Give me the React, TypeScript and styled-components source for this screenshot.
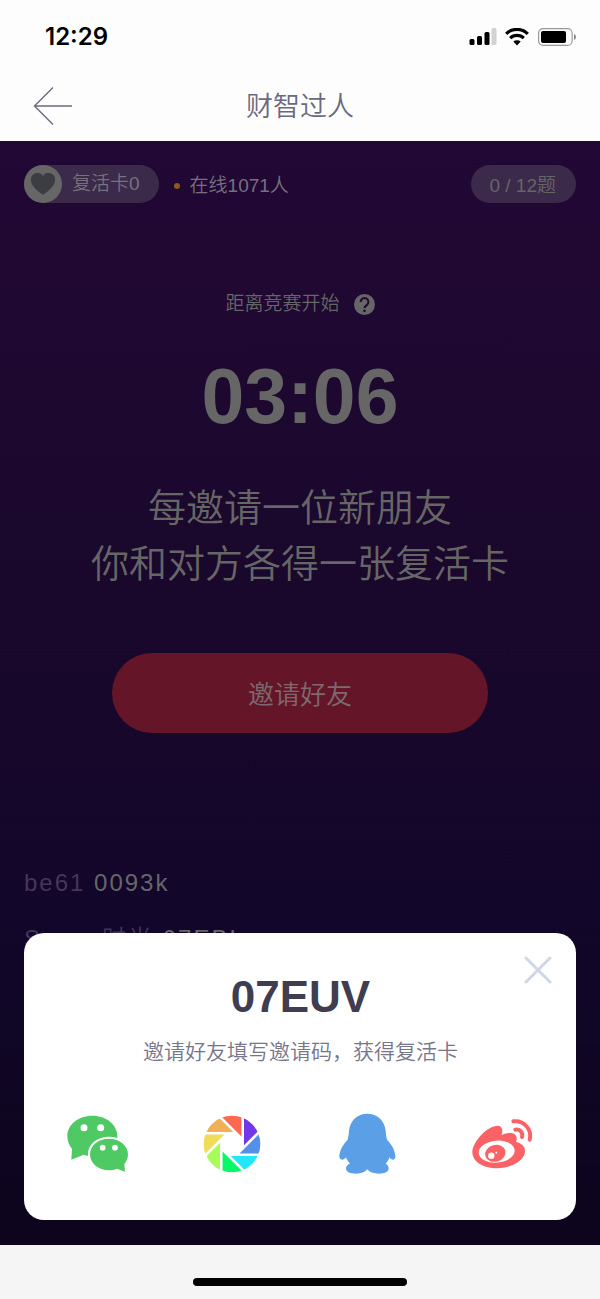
import React from "react";
import styled, { createGlobalStyle } from "styled-components";

const GlobalStyle = createGlobalStyle`
  *, *::before, *::after { box-sizing: border-box; }
  body {
    margin: 0;
    font-family: "Liberation Sans", "Noto Sans CJK SC", sans-serif;
    font-weight: 350;
  }
  button { font: inherit; color: inherit; border: 0; background: none; padding: 0; cursor: pointer; }
  h1, p, ul { margin: 0; padding: 0; }
  svg { display: block; }
`;

const Screen = styled.div`
  display: flex;
  flex-direction: column;
  min-height: 100vh;
  background: #f5f5f5;
`;

const Header = styled.header`
  background: #fdfdfd;
`;

const StatusBar = styled.div`
  display: flex;
  align-items: center;
  justify-content: space-between;
  height: 72px;
  padding: 2px 23px 0 45px;
`;

const Clock = styled.time`
  font: 600 24px/32px Inter, sans-serif;
  color: #000;
`;

const StatusIcons = styled.div`
  display: flex;
  align-items: center;
  gap: 8px;
`;

const NavBar = styled.nav`
  display: grid;
  grid-template-columns: 1fr auto 1fr;
  align-items: center;
  height: 69px;
  padding: 0 32px;
`;

const BackButton = styled.button`
  justify-self: start;
`;

const Title = styled.h1`
  font-size: 27px;
  line-height: 40px;
  font-weight: 350;
  color: #6b6980;
`;

const Stage = styled.main`
  position: relative;
  flex: 1;
  display: flex;
  flex-direction: column;
  padding: 24px 24px 0;
  background: linear-gradient(#220835, #1a082c 40%, #12062a 70%, #0c051c);
  color: #666;
`;

const InfoRow = styled.div`
  display: flex;
  align-items: center;
  font-size: 19px;
  line-height: 38px;
`;

const Pill = styled.div`
  display: flex;
  align-items: center;
  height: 38px;
  border-radius: 19px;
  background: #3b2a4a;
`;

const LifePill = styled(Pill)`
  gap: 10px;
  padding-right: 19px;
  color: #77707f;
`;

const ProgressPill = styled(Pill)`
  margin-left: auto;
  padding: 3px 20px 0 18px;
`;

const HeartBadge = styled.span`
  display: grid;
  place-items: center;
  width: 38px;
  height: 38px;
  border-radius: 50%;
  background: #666;
`;

const Online = styled.div`
  display: flex;
  align-items: center;
  gap: 10px;
  height: 38px;
  margin-left: 15px;
  padding-top: 3px;
  color: #77707f;

  &::before {
    content: "";
    width: 6px;
    height: 6px;
    border-radius: 50%;
    background: #8c5a1c;
  }
`;

const Caption = styled.div`
  display: flex;
  align-items: center;
  justify-content: center;
  gap: 14px;
  margin-top: 86px;
  font-size: 19px;
  line-height: 30px;
`;

const HelpButton = styled.button`
  width: 21px;
  height: 21px;
`;

const Countdown = styled.div`
  margin-top: 33px;
  font-size: 77px;
  line-height: 88px;
  font-weight: 700;
  text-align: center;
`;

const Pitch = styled.p`
  margin-top: 40px;
  font-size: 38px;
  line-height: 56px;
  text-align: center;
`;

const InviteButton = styled.button`
  align-self: center;
  width: 68%;
  height: 80px;
  margin-top: 61px;
  padding-bottom: 2px;
  border-radius: 40px;
  background: #641628;
  font-size: 26px;
  color: #7c6a70;
`;

const Messages = styled.ul`
  margin-top: 122px;
  list-style: none;
  font-size: 24px;
  line-height: 56px;
  letter-spacing: 2px;
`;

const Sender = styled.span`
  color: #44365a;
`;

const Sheet = styled.section`
  position: absolute;
  left: 24px;
  right: 24px;
  bottom: 25px;
  padding: 38px 41px 44px 42px;
  border-radius: 20px;
  background: #fff;
  text-align: center;
`;

const CloseButton = styled.button`
  position: absolute;
  top: 23px;
  right: 24px;
`;

const Code = styled.div`
  font-size: 44px;
  line-height: 52px;
  font-weight: 700;
  color: #403d50;
`;

const Hint = styled.p`
  margin-top: 14px;
  font-size: 21px;
  line-height: 30px;
  color: #77758a;
`;

const ShareRow = styled.div`
  display: flex;
  justify-content: space-between;
  margin-top: 45px;
`;

const Footer = styled.footer`
  display: flex;
  justify-content: center;
  padding: 33px 0 13px;
`;

const HomeIndicator = styled.div`
  width: 214px;
  height: 8px;
  border-radius: 4px;
  background: #000;
`;

const SignalIcon = () => (
  <svg width="28" height="18" viewBox="0 0 28 18" aria-hidden="true">
    <rect x="0.5" y="11" width="5" height="6" rx="1.5" />
    <rect x="8" y="8" width="5" height="9" rx="1.5" />
    <rect x="15.5" y="4" width="5" height="13" rx="1.5" />
    <rect x="22.5" y="0" width="5" height="17" rx="1.5" fill="#d2d2d2" />
  </svg>
);

const WifiIcon = () => (
  <svg width="24" height="18" viewBox="0 0 24 18" aria-hidden="true">
    <g fill="none" stroke="#000" strokeWidth="3.2">
      <path d="M1.2 5.8a15.4 15.4 0 0 1 21.6 0" />
      <path d="M5.2 10.2a9.7 9.7 0 0 1 13.6 0" />
    </g>
    <path d="M8.3 13.6a5.4 5.4 0 0 1 7.4 0L12 17.4z" />
  </svg>
);

const BatteryIcon = () => (
  <svg width="40" height="18" viewBox="0 0 40 18" aria-hidden="true">
    <rect x="1.6" y="0.6" width="33.5" height="16.8" rx="4.5" fill="none" stroke="#999" strokeWidth="1.2" />
    <rect x="4" y="3" width="25" height="12" rx="2" />
    <path d="M37 6v6c2.6-1 2.6-5 0-6z" fill="#888" />
  </svg>
);

const BackIcon = () => (
  <svg width="40" height="40" viewBox="0 0 40 40" fill="none" stroke="#6b6980" strokeWidth="1.4" aria-hidden="true">
    <path d="M21 0.5 2.5 19 21 37.5M2.5 19H40" />
  </svg>
);

const HeartIcon = () => (
  <svg width="26" height="22" viewBox="0 0 26 22" fill="#3c3d42" aria-hidden="true">
    <path d="M13 22C8 18.5 1 13 1 7a6.5 6.5 0 0 1 12-4A6.5 6.5 0 0 1 25 7c0 6-7 11.5-12 15z" />
  </svg>
);

const HelpIcon = () => (
  <svg width="21" height="21" viewBox="0 0 21 21" aria-hidden="true">
    <circle cx="10.5" cy="10.5" r="10.5" fill="#666" />
    <path
      d="M6.6 7.9a3.9 3.9 0 1 1 6.1 3.2c-1.5 1-2.2 1.6-2.2 3"
      fill="none"
      stroke="#1f0832"
      strokeWidth="2"
    />
    <circle cx="10.5" cy="16.7" r="1.3" fill="#1f0832" />
  </svg>
);

const CloseIcon = () => (
  <svg width="28" height="28" viewBox="0 0 28 28" stroke="#cfd6e8" strokeWidth="3" strokeLinecap="round" aria-hidden="true">
    <path d="M2 2l24 24M26 2 2 26" />
  </svg>
);

const ShareIcon = ({ children }: { children: React.ReactNode }) => (
  <svg width="64" height="64" viewBox="48 36 192 192" aria-hidden="true">
    {children}
  </svg>
);

const WechatIcon = () => (
  <ShareIcon>
    <path
      fill="#4fc963"
      d="M127 47c42 0 75 27 75 61s-33 60-75 60c-9 0-18-1-26-4l-37 15 2-32c-9-11-14-24-14-39 0-34 33-61 75-61z"
    />
    <path
      fill="#4fc963"
      stroke="#fff"
      strokeWidth="12"
      paintOrder="stroke"
      d="M177 116c32 0 57 21 57 47 0 11-4 21-11 29l2 23-24-9c-7 3-15 5-24 5-32 0-57-21-57-48s25-47 57-47z"
    />
    <g fill="#fff">
      <circle cx="102" cy="83" r="10.5" />
      <circle cx="152" cy="83" r="10.5" />
      <circle cx="158" cy="143" r="8.5" />
      <circle cx="195" cy="143" r="8.5" />
    </g>
  </ShareIcon>
);

const BLADES = ["#7038e8", "#5590e8", "#20e8f8", "#08f868", "#a8fc58", "#f0dc58", "#f0b058", "#fc6850"];

const MomentsIcon = () => (
  <ShareIcon>
    <clipPath id="lens">
      <circle cx="141" cy="132" r="85" />
    </clipPath>
    <g clipPath="url(#lens)">
      {BLADES.map((color, i) => (
        <path key={color} fill={color} d="M177 10v126l90-90z" transform={`rotate(${i * 45} 141 132)`} />
      ))}
    </g>
  </ShareIcon>
);

const QqIcon = () => (
  <ShareIcon>
    <path
      fill="#5b9fe6"
      d="M142 41c30 0 52 21 55 52 1 10 2 20 5 28 14 13 24 34 24 48 0 6-2 10-7 10-4 0-8-3-11-7-2 8-6 14-11 19 6 3 9 8 9 14 0 12-14 16-30 16-15 0-27-4-34-13-7 9-19 13-34 13-16 0-30-4-30-16 0-6 4-11 12-14-5-5-9-11-12-19-3 4-7 7-12 7s-8-4-8-10c0-14 10-35 24-48 3-8 4-18 5-28 3-31 25-52 55-52z"
    />
  </ShareIcon>
);

const WeiboIcon = () => (
  <ShareIcon>
    <path
      fill="#fa6266"
      d="M52 155c1-30 45-78 76-78 12 0 17 11 12 28 15-8 42-11 45 8 1 5-2 9-1 13 12 3 26 11 26 27 0 30-45 52-84 52-42 0-75-20-74-50z"
    />
    <ellipse cx="125" cy="155" rx="54" ry="33" fill="#fff" transform="rotate(-5 125 155)" />
    <ellipse cx="121" cy="160" rx="31" ry="25" fill="#fa6266" transform="rotate(-15 121 160)" />
    <circle cx="109" cy="167" r="9.5" fill="#fff" />
    <circle cx="124" cy="158" r="3" fill="#fff" />
    <g fill="none" stroke="#fa6266" strokeWidth="12" strokeLinecap="round">
      <path d="M175 64c32-4 57 25 49 55" />
      <path d="M181 89c14-3 24 9 20 22" />
    </g>
  </ShareIcon>
);

const shares = [
  { label: "微信", Icon: WechatIcon },
  { label: "朋友圈", Icon: MomentsIcon },
  { label: "QQ", Icon: QqIcon },
  { label: "微博", Icon: WeiboIcon },
];

const messages = [
  { name: "be61", code: "0093k" },
  { name: "Sunny时光", code: "07EBL" },
];

export default function App() {
  return (
    <Screen>
      <GlobalStyle />
      <Header>
        <StatusBar>
          <Clock>12:29</Clock>
          <StatusIcons>
            <SignalIcon />
            <WifiIcon />
            <BatteryIcon />
          </StatusIcons>
        </StatusBar>
        <NavBar>
          <BackButton aria-label="返回">
            <BackIcon />
          </BackButton>
          <Title>财智过人</Title>
        </NavBar>
      </Header>

      <Stage>
        <InfoRow>
          <LifePill>
            <HeartBadge>
              <HeartIcon />
            </HeartBadge>
            复活卡0
          </LifePill>
          <Online>在线1071人</Online>
          <ProgressPill>0 / 12题</ProgressPill>
        </InfoRow>
        <Caption>
          距离竞赛开始
          <HelpButton aria-label="帮助">
            <HelpIcon />
          </HelpButton>
        </Caption>
        <Countdown>03:06</Countdown>
        <Pitch>
          每邀请一位新朋友
          <br />
          你和对方各得一张复活卡
        </Pitch>
        <InviteButton>邀请好友</InviteButton>
        <Messages>
          {messages.map(({ name, code }) => (
            <li key={code}>
              <Sender>{name}</Sender> {code}
            </li>
          ))}
        </Messages>

        <Sheet role="dialog" aria-label="邀请码">
          <CloseButton aria-label="关闭">
            <CloseIcon />
          </CloseButton>
          <Code>07EUV</Code>
          <Hint>邀请好友填写邀请码，获得复活卡</Hint>
          <ShareRow>
            {shares.map(({ label, Icon }) => (
              <button key={label} aria-label={label}>
                <Icon />
              </button>
            ))}
          </ShareRow>
        </Sheet>
      </Stage>

      <Footer>
        <HomeIndicator />
      </Footer>
    </Screen>
  );
}
